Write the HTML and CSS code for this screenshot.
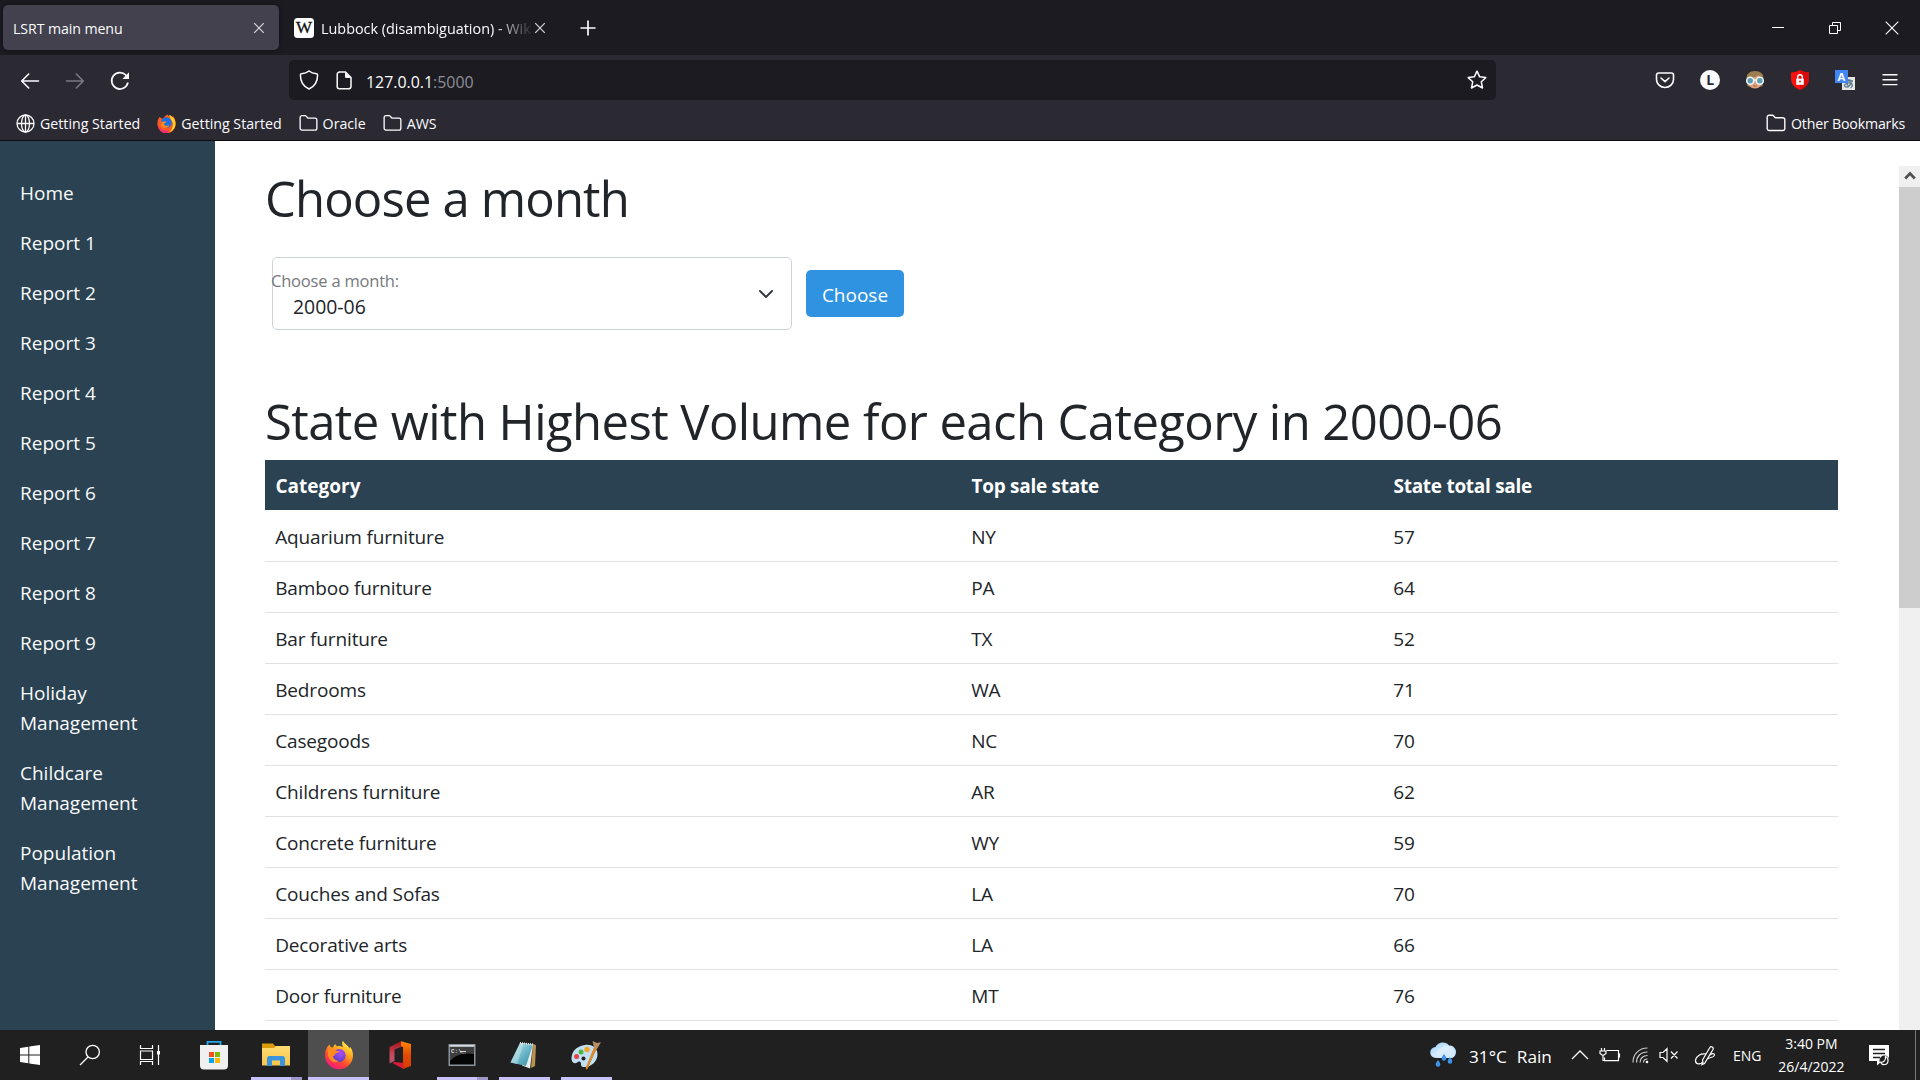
FILE: index.html
```html
<!DOCTYPE html>
<html lang="en">
<head>
<meta charset="utf-8">
<title>LSRT main menu</title>
<link rel="stylesheet" href="styles.css">
</head>
<body>
<svg class="defs" width="0" height="0" aria-hidden="true">
  <defs>
    <linearGradient id="fx-flame" x1="0.8" y1="0.05" x2="0.25" y2="1">
      <stop offset="0" stop-color="#fff04a"/><stop offset="0.35" stop-color="#ffa61e"/><stop offset="0.65" stop-color="#ff4a2e"/><stop offset="1" stop-color="#f3128a"/>
    </linearGradient>
    <radialGradient id="fx-core" cx="0.6" cy="0.3" r="0.8">
      <stop offset="0" stop-color="#b14cf5"/><stop offset="1" stop-color="#4a3fc4"/>
    </radialGradient>
    <linearGradient id="cloud" x1="0" y1="0" x2="1" y2="1">
      <stop offset="0" stop-color="#8ecbf7"/><stop offset="0.5" stop-color="#d6ecfb"/><stop offset="1" stop-color="#9ccdf3"/>
    </linearGradient>
    <linearGradient id="paper" x1="0" y1="0" x2="1" y2="1">
      <stop offset="0" stop-color="#c9eef5"/><stop offset="0.5" stop-color="#6fb9cb"/><stop offset="1" stop-color="#348aa3"/>
    </linearGradient>
    <linearGradient id="office" x1="0" y1="0" x2="0" y2="1">
      <stop offset="0" stop-color="#a3101c"/><stop offset="0.6" stop-color="#c94a5c"/><stop offset="1" stop-color="#b0566e"/>
    </linearGradient>
    <linearGradient id="office-right" x1="0" y1="0" x2="0" y2="1">
      <stop offset="0" stop-color="#ff8a00"/><stop offset="0.5" stop-color="#e24a06"/><stop offset="1" stop-color="#d83b01"/>
    </linearGradient>
    <linearGradient id="folder-face" x1="0" y1="0" x2="0" y2="1">
      <stop offset="0" stop-color="#ffdc73"/><stop offset="1" stop-color="#f7c64b"/>
    </linearGradient>
    <symbol id="folder" viewBox="0 0 20 18">
      <path d="M1.2 14.5V3.2a2 2 0 0 1 2-2h3.6l2.6 2.6h7.4a2 2 0 0 1 2 2v8.7a2 2 0 0 1-2 2H3.2a2 2 0 0 1-2-2z" fill="none" stroke="#fbfbfe" stroke-width="1.4"/>
    </symbol>
  </defs>
</svg>

<div class="desktop">
  <header class="browser">
    <div class="tabstrip">
      <div class="tab tab-active">
        <span class="tab-title">LSRT main menu</span>
        <svg class="tab-close" width="12" height="12" viewBox="0 0 12 12"><path d="M1.2 1.2l9.6 9.6M10.8 1.2L1.2 10.8" stroke="#d6d6dc" stroke-width="1.2"/></svg>
      </div>
      <div class="tab tab-wiki">
        <svg width="20" height="20" viewBox="0 0 20 20"><rect width="20" height="20" rx="3.5" fill="#fff"/><text x="10" y="15.4" text-anchor="middle" class="wiki-w">W</text></svg>
        <span class="tab-title fading">Lubbock (disambiguation) - Wikipedia</span>
        <svg class="tab-close" width="12" height="12" viewBox="0 0 12 12"><path d="M1.2 1.2l9.6 9.6M10.8 1.2L1.2 10.8" stroke="#d6d6dc" stroke-width="1.2"/></svg>
      </div>
      <svg class="new-tab" width="16" height="16" viewBox="0 0 16 16"><path d="M8 .5v15M.5 8h15" stroke="#fbfbfe" stroke-width="1.7"/></svg>
      <div class="window-controls">
        <svg width="14" height="14" viewBox="0 0 14 14"><path d="M1 6.5h12" stroke="#fff"/></svg>
        <svg width="14" height="14" viewBox="0 0 14 14"><path d="M1.5 4.5h8v8h-8zM4.5 4.500V1.500h8v8h-3" fill="none" stroke="#fff"/></svg>
        <svg width="14" height="14" viewBox="0 0 14 14"><path d="M.7.7l12.6 12.6M13.300.7L.7 13.300" stroke="#fff" stroke-width="1.1"/></svg>
      </div>
    </div>

    <div class="navbar">
      <div class="nav-buttons">
        <svg width="20" height="20" viewBox="0 0 20 20" fill="none" stroke="#fbfbfe" stroke-width="1.6" stroke-linecap="round" stroke-linejoin="round"><path d="M18.500 10H1.800M8.700 3L1.700 10l7 7"/></svg>
        <svg width="20" height="20" viewBox="0 0 20 20" fill="none" stroke="#7b7a82" stroke-width="1.6" stroke-linecap="round" stroke-linejoin="round"><path d="M1.500 10h16.700M11.300 3l7 7-7 7"/></svg>
        <svg width="20" height="20" viewBox="0 0 20 20"><path d="M17.800 12A8.200 8.200 0 1 1 16 4.300" fill="none" stroke="#fbfbfe" stroke-width="1.700" stroke-linecap="round"/><path d="M19 1.300v6.100a.6.6 0 0 1-.6.6h-6z" fill="#fbfbfe"/></svg>
      </div>
      <div class="urlbar">
        <svg width="20" height="20" viewBox="0 0 20 20"><path d="M10 1c2 1.700 4.700 2.500 7.600 2.700.8 0 1 .7 1 1.300 0 6-2.600 11.300-8.600 14C4 16.300 1.400 11 1.400 5c0-.6.2-1.300 1-1.300C5.300 3.500 8 2.700 10 1z" fill="none" stroke="#fbfbfe" stroke-width="1.500"/></svg>
        <svg class="page-icon" width="16" height="19" viewBox="0 0 16 19"><path d="M3.500 1h6L15 6.500v9a2.300 2.300 0 0 1-2.300 2.300H3.500A2.300 2.300 0 0 1 1.200 15.500V3.300A2.300 2.300 0 0 1 3.500 1z" fill="none" stroke="#fbfbfe" stroke-width="1.500"/><path d="M9 1l6 6H10.200A1.200 1.200 0 0 1 9 5.800z" fill="#fbfbfe"/></svg>
        <span class="url"><span>127.0.0.1</span><span class="port">:5000</span></span>
        <svg class="star" width="20" height="20" viewBox="0 0 20 20"><path d="M10 1.200l2.700 5.600 6.100.8-4.500 4.200 1.200 6.200L10 15l-5.500 3 1.200-6.200L1.200 7.600l6.100-.8z" fill="none" stroke="#fbfbfe" stroke-width="1.500" stroke-linejoin="round"/></svg>
      </div>
      <div class="extensions">
        <svg width="20" height="20" viewBox="0 0 20 20" fill="none" stroke="#fbfbfe" stroke-width="1.600" stroke-linecap="round" stroke-linejoin="round"><path d="M3.500 3h13a2 2 0 0 1 2 2v4.500a8.500 8 0 0 1-17 0V5a2 2 0 0 1 2-2z"/><path d="M6 8l4 3.700L14 8"/></svg>
        <svg width="20" height="20" viewBox="0 0 20 20"><circle cx="10" cy="10" r="10" fill="#fbfbfe"/><text x="10.200" y="15" text-anchor="middle" class="account-letter">L</text></svg>
        <svg width="20" height="20" viewBox="0 0 20 20"><path d="M1.500 9c-.2-5 3-8 8.500-8s8.700 3 8.500 8l-1 7c-3 1.500-13 1.500-15 0z" fill="#9b7e50"/><path d="M3.500 8c4 0 8-1 10-3 .8 1.500 2 2.500 3 3l-.3 6.500c-1.500 3-3.500 4-6.200 4s-4.700-1-6.200-4z" fill="#e0a07c"/><circle cx="5.200" cy="10.700" r="3.500" fill="#609cab" stroke="#edf6f8" stroke-width="1.500"/><circle cx="14.800" cy="10.700" r="3.500" fill="#609cab" stroke="#edf6f8" stroke-width="1.500"/><path d="M8.500 10h3" stroke="#edf6f8" stroke-width="1.500"/><path d="M8.300 16h3.400" stroke="#a6604a"/></svg>
        <svg width="20" height="20" viewBox="0 0 20 20"><path d="M10 0c2.500 1.800 5.500 2.300 9 2.400V9c0 5-3.500 8.700-9 11-5.500-2.300-9-6-9-11V2.400C4.500 2.300 7.500 1.800 10 0z" fill="#fb1010"/><path d="M10 0c2.500 1.800 5.500 2.300 9 2.400V9c0 5-3.500 8.700-9 11z" fill="#d90b0b"/><path d="M6.200 8.700h7.600v6.100H6.200z" fill="#fff"/><path d="M7.700 9V7a2.300 2.300 0 0 1 4.600 0v2" fill="none" stroke="#fff" stroke-width="1.400"/><circle cx="10" cy="11.500" r=".9" fill="#e81010"/></svg>
        <svg class="translate" width="20" height="20" viewBox="0 0 20 20"><path d="M7 7h13v13H7z" fill="#e6e6e3"/><path d="M10 11h8M11 9.500l5 1M16.500 12c-1 4-4.500 6-6.500 4.500s2-4 5-3.500 3 4 .5 5M12 12c0 2 .5 3.500 2 5" fill="none" stroke="#55798c" stroke-width="1.300"/><path d="M0 0h13v13H0z" fill="#4285f4"/><text x="6.500" y="10.800" text-anchor="middle" class="translate-letter">A</text></svg>
        <svg width="20" height="20" viewBox="0 0 20 20"><path d="M3 4.800h14M3 9.700h14M3 14.600h14" stroke="#fbfbfe" stroke-width="1.400" stroke-linecap="round"/></svg>
      </div>
    </div>

    <div class="bookmarks">
      <div class="bookmark"><svg width="19" height="19" viewBox="0 0 19 19" fill="none" stroke="#fbfbfe" stroke-width="1.300"><circle cx="9.500" cy="9.500" r="8.500"/><ellipse cx="9.500" cy="9.500" rx="4" ry="8.500"/><path d="M1 9.500h17M9.500 1v17"/></svg><span>Getting Started</span></div>
      <div class="bookmark"><svg width="19" height="19" viewBox="0 0 20 20"><path d="M3 3l1.500 1.800L7 4.500C8 2 10 1 11 .5c1 1.500 3 2 4.500 3L17 2c1.800 2.500 2.700 5 2.500 8.500A9.500 9.500 0 0 1 .5 11C.4 8 1 5 3 3z" fill="#ff5a1f"/><path d="M.6 10c1 5 5 8 12 7.500L11 20A9.500 9.500 0 0 1 .6 10z" fill="#f5287a"/><path d="M13 .8c4 2 6.600 5.500 6.500 9.700 0 4-3 7.500-6 8.500 2-3 4-6 3-10-.6-2.500-3.500-4-3.500-8.200z" fill="#ffcf2e"/><path d="M4.500 7c2-4 7-5 10-1 2 3 .5 8-3.500 8.500-3.500.5-7-3-6.500-7.500z" fill="#1b6fe0"/><path d="M5 8c2 0 4-.5 5 .5-1 1.300-2.500 1-2.700 2.500 1.500 2 4 1.500 5.700.5-1.500 4-7 4-9 0z" fill="#ff8a1c"/></svg><span>Getting Started</span></div>
      <div class="bookmark"><svg width="19" height="18"><use href="#folder"/></svg><span>Oracle</span></div>
      <div class="bookmark"><svg width="19" height="18"><use href="#folder"/></svg><span>AWS</span></div>
      <div class="bookmark other"><svg width="20" height="18"><use href="#folder"/></svg><span>Other Bookmarks</span></div>
    </div>
  </header>

  <div class="page">
    <nav class="sidebar">
      <a>Home</a><a>Report 1</a><a>Report 2</a><a>Report 3</a><a>Report 4</a><a>Report 5</a><a>Report 6</a><a>Report 7</a><a>Report 8</a><a>Report 9</a>
      <a>Holiday Management</a><a>Childcare Management</a><a>Population Management</a>
    </nav>
    <main class="content">
      <h1 class="form-title">Choose a month</h1>
      <form class="month-form">
        <div class="month-select">
          <div class="month-text">
            <label>Choose a month:</label>
            <span class="month-value">2000-06</span>
          </div>
          <svg width="16" height="10" viewBox="0 0 16 10"><path d="M2 2l6 6 6-6" fill="none" stroke="#343a40" stroke-width="2" stroke-linecap="round" stroke-linejoin="round"/></svg>
        </div>
        <button type="button" class="choose">Choose</button>
      </form>
      <h1>State with Highest Volume for each Category in 2000-06</h1>
      <table>
        <colgroup><col class="col-category"><col class="col-state"><col></colgroup>
        <thead><tr><th>Category</th><th>Top sale state</th><th>State total sale</th></tr></thead>
        <tbody>
          <tr><td>Aquarium furniture</td><td>NY</td><td>57</td></tr>
          <tr><td>Bamboo furniture</td><td>PA</td><td>64</td></tr>
          <tr><td>Bar furniture</td><td>TX</td><td>52</td></tr>
          <tr><td>Bedrooms</td><td>WA</td><td>71</td></tr>
          <tr><td>Casegoods</td><td>NC</td><td>70</td></tr>
          <tr><td>Childrens furniture</td><td>AR</td><td>62</td></tr>
          <tr><td>Concrete furniture</td><td>WY</td><td>59</td></tr>
          <tr><td>Couches and Sofas</td><td>LA</td><td>70</td></tr>
          <tr><td>Decorative arts</td><td>LA</td><td>66</td></tr>
          <tr><td>Door furniture</td><td>MT</td><td>76</td></tr>
        </tbody>
      </table>
    </main>
    <div class="scrollbar">
      <div class="scroll-up"><svg width="12" height="9" viewBox="0 0 12 9"><path d="M1.200 7.500L6 2.500l4.800 5" fill="none" stroke="#505050" stroke-width="2.600"/></svg></div>
      <div class="scroll-thumb"></div>
    </div>
  </div>

  <footer class="taskbar">
    <div class="system-button"><svg width="22" height="22" viewBox="0 0 22 22" fill="#fff"><path d="M1 4l8.300-1.200v7.700H1zM10.300 2.600L21 1v9.500H10.300zM1 11.500h8.300v7.700L1 18zM10.300 11.500H21V21l-10.700-1.600z"/></svg></div>
    <div class="system-button"><svg width="22" height="22" viewBox="0 0 22 22" fill="none" stroke="#fff" stroke-width="1.300"><circle cx="13.700" cy="8" r="6.700"/><path d="M9 13L1 21"/></svg></div>
    <div class="system-button"><svg width="22" height="22" viewBox="0 0 22 22" fill="none" stroke="#fff" stroke-width="1.200"><path d="M1.500 1v3.500h12V1M1.500 7h12v8.500h-12zM1.500 21v-3.500h12V21M19.500 1v20"/><path d="M18 7h3v3.500h-3z" fill="#fff" stroke="none"/></svg></div>

    <div class="apps">
      <div class="app"><svg width="30" height="30" viewBox="0 0 30 30"><path d="M8.500 7V1.800h13V7" fill="none" stroke="#22a7e8" stroke-width="1.800"/><path d="M1 5h28v20.500a4 4 0 0 1-4 4H5a4 4 0 0 1-4-4z" fill="#f0f0f0"/><path d="M10 12h5v5h-5z" fill="#f25022"/><path d="M16 12h5v5h-5z" fill="#7fba00"/><path d="M10 18h5v5h-5z" fill="#00a4ef"/><path d="M16 18h5v5h-5z" fill="#ffb900"/></svg></div>
      <div class="app running grouped"><svg width="30" height="30" viewBox="0 0 30 30"><path d="M1 3.500h11l2 2.500h14v8H1z" fill="#dd9a0b"/><path d="M1 8h12l2-2h14v19.500H1z" fill="url(#folder-face)"/><path d="M6 26V18.500a2.500 2.500 0 0 1 2.500-2.500h13a2.500 2.500 0 0 1 2.500 2.500V26h-5v-5.500h-8V26z" fill="#3c95dc"/></svg></div>
      <div class="app active"><svg width="30" height="30" viewBox="0 0 30 30"><path d="M19 .8c-1.500 2.500-1 4.500.5 6.700-1.500-1-4-1.800-6-1.200-1-.3-2-1-2.300-2.200-1 .8-1.700 2-2 3.300-1 0-2-.2-2.500-.3-.6-.6-.8-1.500-.9-2.600C3 6.500 1 10.500 1 15.500a14 13.700 0 0 0 28 0c0-3.500-1-6.700-3.200-8.800l-.2 2C24.500 5.500 20.500 4 19 .8z" fill="url(#fx-flame)"/><circle cx="15.300" cy="15.500" r="6.400" fill="url(#fx-core)"/><path d="M4 10c3.500-2 6.500-.5 8 .8 1 .2 2.700 0 3.200.8-.8 1.500-3.800 1.500-4.200 2.700-.2 1.200-1 2-2.500 2 1 3 4 5 7 4.500-6 4-13-1-11.500-10.800z" fill="#ff8b22"/></svg></div>
      <div class="app"><svg width="26" height="30" viewBox="0 0 26 30"><path d="M2.500 7L14 1.200V7L7.500 9.500V21L2.500 23.500z" fill="url(#office)"/><path d="M14 1.200L24 4v22l-8 3V7L14 6.500z" fill="url(#office-right)"/><path d="M5.500 23l2-1 9 1v6z" fill="#dc1c32"/></svg></div>
      <div class="app running grouped"><svg width="28" height="24" viewBox="0 0 28 24"><path d="M.5 1h27v22H.5z" fill="#8b939a"/><path d="M1.500 2h25v1.500h-25z" fill="#d7dbdf"/><path d="M2 4h24v17.500H2z" fill="#050505"/><path d="M2 4h24v7C16 9 7 12 2 18z" fill="#3d3d3d"/><text x="3" y="10" class="prompt">C:\_</text><path d="M12 8.500h6" stroke="#ddd"/></svg></div>
      <div class="app running"><svg width="30" height="30" viewBox="0 0 30 30"><path d="M24 4l3 1-1 21-4 2z" fill="#b9924e"/><path d="M11 3l13 1.500L21 28.500l-8-3z" fill="#e7eeee"/><path d="M11 3l13 1.500L17 26 1.500 22.500z" fill="url(#paper)"/><path d="M11 3l4 .5L8 24l-6.500-1.500z" fill="#c8e6ea" opacity=".5"/><path d="M11 3l13.500 1.500" stroke="#e3e3e3" stroke-width="2" stroke-dasharray="1 1"/></svg></div>
      <div class="app running"><svg width="32" height="30" viewBox="0 0 32 30"><path d="M15 5c8-1 13 4 12.500 10C27 22 21 26.500 15.500 27c-3 .2-4.500-.5-4.500-2.500 0-1.500 0-3-2-3-1 0-2 1.700-4 1.700-3.500-.2-4-4.500-3-8.200C3.500 9.500 8 6 15 5z" fill="#c2dff3"/><circle cx="6.500" cy="16.500" r="2.500" fill="#e54343"/><circle cx="11" cy="12" r="2.500" fill="#4eb547"/><circle cx="17" cy="9.500" r="2.700" fill="#f3a62b"/><circle cx="13.500" cy="18.500" r="2" fill="#222"/><path d="M24.500 7l2.200.7L17 29l-1-.5z" fill="#dc8929" stroke="#dc8929"/><path d="M22.500 1l4.500 2 4-.7-2 3.200-2 3.500-3-1.500z" fill="#b98e62"/></svg></div>
    </div>

    <div class="tray">
      <svg class="weather" width="28" height="28" viewBox="0 0 28 28"><path d="M6 17a5.500 5.500 0 0 1-.5-11A8 8 0 0 1 19 4.500 6.500 6.500 0 0 1 22 17z" fill="url(#cloud)"/><path d="M8 16a5 5 0 0 1 2-8 6.500 6.500 0 0 1 11-.5A5 5 0 0 1 22 17H10z" fill="#dceefb" opacity=".8"/><g fill="#3e94ea"><path d="M8 19c1.500 2 2.300 3 2.300 4.500a2.300 2.300 0 0 1-4.600 0C5.700 22 6.500 21 8 19zM14 13c1.500 2 2.300 3 2.300 4.500a2.300 2.300 0 0 1-4.600 0C11.700 16 12.500 15 14 13zM20 16c1.500 2 2.300 3 2.300 4.500a2.300 2.300 0 0 1-4.600 0C17.700 19 18.500 18 20 16z"/></g></svg>
      <span class="temperature">31°C</span><span class="condition">Rain</span>
      <svg class="tray-up" width="18" height="10" viewBox="0 0 18 10"><path d="M1 9l8-8 8 8" fill="none" stroke="#fff" stroke-width="1.300"/></svg>
      <svg class="battery" width="22" height="16" viewBox="0 0 22 16" fill="none" stroke="#fff" stroke-width="1.200"><path d="M5.500 10.500v3.200h14V3.500H7.500"/><path d="M20.500 6.500v4"/><path d="M2.500 1v3M5.500 1v3M1 4h6v2.500L5 8H3L1 6.500zM4 8v5.500h2"/></svg>
      <svg class="wifi" width="17" height="17" viewBox="0 0 17 17" fill="none" stroke="#c9c9c9" stroke-width="1.200"><path d="M1 15.500C1 7 7 1 15.500 1M4.500 15.500c0-6 4-10.500 11-10.500M8 15.500c0-4 3-7 7.500-7" /><path d="M11.500 15.500c0-2 1.500-3.500 4-3.500"/><circle cx="15" cy="15" r="1.300" fill="#fff" stroke="none"/></svg>
      <svg class="sound" width="20" height="16" viewBox="0 0 20 16" fill="none" stroke="#fff" stroke-width="1.200"><path d="M1 5.500h3L8 1.700v12.600L4 10.500H1zM12 4.500l6.500 7M18.500 4.500l-6.500 7"/></svg>
      <svg class="pen" width="22" height="21" viewBox="0 0 22 21" fill="none" stroke="#fff" stroke-width="1.200"><path d="M9 17.500l-1 2 2.500-1L19 4.500a1.800 1.800 0 0 0-3.300-1.800L8.500 15z"/><path d="M12 9C7 8 2 11 1.500 15.500c-.3 4 5 4.500 7 1.500M16 10c3-2.500 5.500-1 4 1s-5 1-6 3"/></svg>
      <span class="language">ENG</span>
      <div class="clock"><span>3:40 PM</span><span>26/4/2022</span></div>
      <svg class="notifications" width="21" height="21" viewBox="0 0 21 21"><path d="M0 0h20v16h-7l-5 4.500V16H0z" fill="#fff"/><path d="M4 4.500h12M4 8.500h12M4 12.500h7" stroke="#202020" stroke-width="1.300"/><circle cx="15.500" cy="15.500" r="5" fill="#202020"/><path d="M16.500 11.500c3.500 1 3.500 7.500-.7 8-2 .3-3.600-.8-4.200-2.300 3 .3 5.400-2.200 4.900-5.700z" fill="#202020" stroke="#fff" stroke-width="1.200"/></svg>
    </div>
  </footer>
</div>
</body>
</html>
```
FILE: styles.css
```css
* { box-sizing: border-box; }

body {
  margin: 0;
  background: #fff;
  color: #212529;
  font-family: "Open Sans", "Noto Sans", sans-serif;
  overflow: hidden;
}

svg { display: block; flex: none; }
.defs { position: absolute; }

.desktop {
  display: flex;
  flex-direction: column;
  width: 1920px;
  height: 1080px;
}

/* Browser chrome */
.browser {
  flex: none;
  height: 141px;
  background: #2b2a33;
  border-bottom: 1px solid #0c0c0d;
  color: #fbfbfe;
  font-size: 14.200px;
}

.tabstrip {
  display: flex;
  align-items: center;
  height: 55px;
  padding-left: 3px;
  background: #1c1b22;
}

.tab {
  display: flex;
  align-items: center;
  height: 45px;
  white-space: nowrap;
}

.tab-active {
  width: 276px;
  padding: 0 14px 0 10px;
  border-radius: 5px;
  background: #42414d;
  box-shadow: 0 0 4px rgba(0, 0, 0, .5);
}

.tab-title { padding-top: 2px; letter-spacing: -.1px; }
.tab-close { margin-left: auto; }
.tab-wiki { width: 282px; padding: 0 15px; }

.tab-wiki .tab-title {
  width: 211px;
  margin-left: 7px;
  overflow: hidden;
  font-size: 14.400px;
  letter-spacing: 0;
}

.fading { mask-image: linear-gradient(to right, #000 82%, transparent 101%); }
.wiki-w { font: 400 17px "Liberation Serif", serif; fill: #111; stroke: #111; stroke-width: .3px; }
.new-tab { margin-left: 18.500px; }

.window-controls {
  display: flex;
  gap: 43px;
  margin-left: auto;
  padding-right: 21.500px;
}

.navbar {
  display: flex;
  align-items: center;
  height: 50px;
  padding: 0 20px;
}

.nav-buttons { display: flex; gap: 25px; width: 269px; padding-top: 1px; }

.urlbar {
  display: flex;
  align-items: center;
  width: 1207px;
  height: 40px;
  padding: 0 9px 0 10px;
  border-radius: 5px;
  background: #1c1b22;
}

.page-icon { margin-left: 17px; }
.url { margin-left: 14px; padding-top: 3px; font-size: 15.900px; }
.port { color: #8f8f96; }
.star { margin-left: auto; }
.extensions { display: flex; gap: 25px; margin-left: auto; }
.account-letter { font: 700 14px "Open Sans", sans-serif; fill: #2b2a33; }
.translate { overflow: visible; }
.translate-letter { font: 700 11.500px/1 "Liberation Sans", sans-serif; fill: #fff; }

.bookmarks {
  display: flex;
  gap: 17px;
  height: 35px;
  padding: 1px 15px 0 16px;
}

.bookmark { display: flex; align-items: center; gap: 5px; }
.other { margin-left: auto; letter-spacing: -.200px; }

/* Web page */
.page {
  display: flex;
  flex: none;
  height: 889px;
  overflow: hidden;
}

.sidebar {
  display: flex;
  flex: none;
  flex-direction: column;
  width: 215px;
  padding-top: 27px;
  background: #2a4252;
  color: #f8f9fa;
  font-size: 19px;
  line-height: 30px;
}

.sidebar a { padding: 10px 40px 10px 20px; }

.content { flex: none; width: 1684px; padding: 27px 61px 0 50px; }

h1 {
  margin: 0;
  font-size: 49px;
  font-weight: 400;
  line-height: 60px;
  letter-spacing: -.570px;
}

.form-title { letter-spacing: -.850px; }

.month-form {
  display: flex;
  align-items: center;
  gap: 14px;
  margin: 29px 0 61px 7px;
  height: 73px;
}

.month-select {
  display: flex;
  align-items: center;
  justify-content: space-between;
  width: 520px;
  height: 73px;
  padding-right: 17px;
  border: 1px solid #ced4da;
  border-radius: 5px;
}

.month-text { display: flex; flex-direction: column; padding-top: 4px; }

.month-text label {
  margin-left: -2px;
  color: #76797c;
  font-size: 16.500px;
  line-height: 22px;
  letter-spacing: -.200px;
}

.month-value {
  padding-left: 20px;
  font-size: 19.400px;
  line-height: 30px;
}

.choose {
  width: 98px;
  height: 47px;
  padding: 2px 0 0;
  border: 0;
  border-radius: 5px;
  background: #2f93e2;
  color: #fff;
  font: 19px/30px "Open Sans", sans-serif;
}

table {
  width: 1573px;
  margin-top: 9px;
  border-collapse: separate;
  border-spacing: 0;
  table-layout: fixed;
  font-size: 19px;
  line-height: 30px;
  letter-spacing: -.150px;
}

.col-category { width: 696px; }
.col-state { width: 422px; }

th {
  padding: 11px 10px 9px 10.500px;
  border-bottom: 1px solid #fff;
  background: #2a4252;
  color: #fff;
  font-weight: 700;
  letter-spacing: -.280px;
  text-align: left;
}

th:first-child { letter-spacing: 0; }

td { padding: 11px 10px 9px 10.200px; border-bottom: 1px solid #dee2e6; }

.scrollbar {
  flex: none;
  width: 21px;
  margin-top: 25px;
  background: #f0f0f0;
}

.scroll-up {
  display: flex;
  align-items: center;
  justify-content: center;
  height: 21px;
  padding-bottom: 2px;
}

.scroll-thumb { height: 421px; background: #cdcdcd; }

/* Taskbar */
.taskbar {
  display: flex;
  flex: none;
  height: 50px;
  background: #202020;
  color: #fff;
}

.system-button {
  display: flex;
  align-items: center;
  justify-content: center;
  width: 60px;
}

.apps { display: flex; margin-left: 3px; }

.app {
  display: flex;
  align-items: center;
  justify-content: center;
  width: 62px;
  background-repeat: no-repeat;
}

.running {
  background-image: linear-gradient(#c9c1fa, #c9c1fa);
  background-position: 6px 100%;
  background-size: 51px 3px;
}

.grouped { background-image: linear-gradient(to right, #c9c1fa 40px, #a098c8 40px); }

.active {
  width: 61px;
  margin-left: 1px;
  background-color: #4e4e4e;
  background-image: linear-gradient(#c9c1fa, #c9c1fa);
  background-position: 0 100%;
  background-size: 100% 3px;
}

.prompt { font: 700 6px "Liberation Mono", monospace; fill: #ddd; }

.tray {
  display: flex;
  align-items: center;
  width: 490px;
  margin-left: auto;
  padding-right: 4px;
  background: linear-gradient(#777, #777) no-repeat 485px 0 / 1px 100%;
  font-size: 14px;
}

.temperature, .condition { padding-top: 2px; font-size: 17.200px; }
.temperature { margin-left: 11px; }
.condition { margin-left: 10px; }
.tray-up { margin-left: 19px; }
.battery { margin-left: 10px; }
.wifi { margin-left: 11px; }
.sound { margin-left: 10px; }
.pen { margin-left: 15px; }
.language { margin-left: 17px; }

.clock {
  display: flex;
  flex-direction: column;
  width: 70px;
  margin-left: 15px;
  line-height: 23px;
  text-align: center;
}

.notifications { margin-left: 22.500px; }
```
